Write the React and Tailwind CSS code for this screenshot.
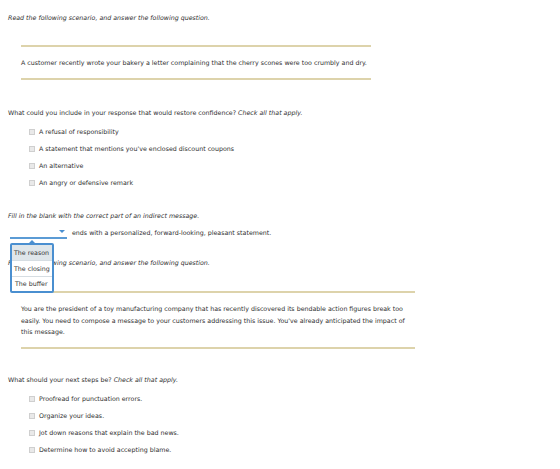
const Box = ({ children, width }) => (
  <div className={`ml-[13px] border-y-2 border-[#ddd3ab] ${width}`}>{children}</div>
)

const Check = ({ label }) => (
  <li className="flex h-[10px] items-center gap-[4px]">
    <span className="h-[6px] w-[6px] shrink-0 border border-[#cfcfcf] bg-[#e9e9e9]" />
    <span>{label}</span>
  </li>
)

const App = () => {
  const first = [
    "A refusal of responsibility",
    "A statement that mentions you've enclosed discount coupons",
    "An alternative",
    "An angry or defensive remark",
  ]
  const second = [
    "Proofread for punctuation errors.",
    "Organize your ideas.",
    "Jot down reasons that explain the bad news.",
    "Determine how to avoid accepting blame.",
  ]

  return (
    <div className="min-h-[469px] bg-white px-[8px] font-['DejaVu_Sans',sans-serif] text-[6.3px] leading-[10px] text-[#2e2e2e]">
      <p className="pt-[13px] italic">Read the following scenario, and answer the following question.</p>

      <div className="mt-[22px]">
        <Box width="w-[350px]">
          <p className="pb-[10px] pt-[11px]">
            A customer recently wrote your bakery a letter complaining that the cherry scones were too crumbly and dry.
          </p>
        </Box>
      </div>

      <p className="mt-[28px]">
        What could you include in your response that would restore confidence? <i>Check all that apply.</i>
      </p>
      <ul className="ml-[21px] mt-[9px] flex flex-col gap-[7px]">
        {first.map((t) => (
          <Check key={t} label={t} />
        ))}
      </ul>

      <p className="mt-[23px] italic">Fill in the blank with the correct part of an indirect message.</p>

      <div className="relative mt-[6px] flex h-[12px] items-center">
        <div className="relative ml-[2px] h-[12px] w-[57px] border-b-2 border-[#5b9bd5]">
          <span className="absolute right-[2px] top-[3px] h-0 w-0 border-x-[3px] border-t-[3px] border-x-transparent border-t-[#4a8fd0]" />
        </div>
        <span className="ml-[5px]">ends with a personalized, forward-looking, pleasant statement.</span>

        {/* open dropdown list */}
        <div className="absolute left-[2px] top-[16px] z-10 w-[44px]">
          <span className="absolute -top-[3px] left-[19px] h-0 w-0 border-x-[3px] border-b-[3px] border-x-transparent border-b-[#4a8fd0]" />
          <ul className="overflow-hidden whitespace-nowrap rounded-[2px] border-2 border-[#4a8fd0] bg-white text-[6.3px] text-[#333]">
            <li className="flex h-[15px] items-center bg-[#dfe6ea] px-[2px]">The reason</li>
            <li className="flex h-[16px] items-center border-t border-[#d6dde2] px-[2px]">The closing</li>
            <li className="flex h-[15px] items-center border-t border-[#d6dde2] px-[3px]">The buffer</li>
          </ul>
        </div>
      </div>

      <p className="mt-[19px] italic">Read the following scenario, and answer the following question.</p>

      <div className="mt-[23px]">
        <Box width="w-[394px]">
          <p className="pb-[9px] pt-[10px] leading-[11.5px]">
            You are the president of a toy manufacturing company that has recently discovered its bendable action figures break too
            <br />
            easily. You need to compose a message to your customers addressing this issue. You've already anticipated the impact of
            <br />
            this message.
          </p>
        </Box>
      </div>

      <p className="mt-[26px]">
        What should your next steps be? <i>Check all that apply.</i>
      </p>
      <ul className="ml-[21px] mt-[9px] flex flex-col gap-[7px]">
        {second.map((t) => (
          <Check key={t} label={t} />
        ))}
      </ul>
    </div>
  )
}

export default App
